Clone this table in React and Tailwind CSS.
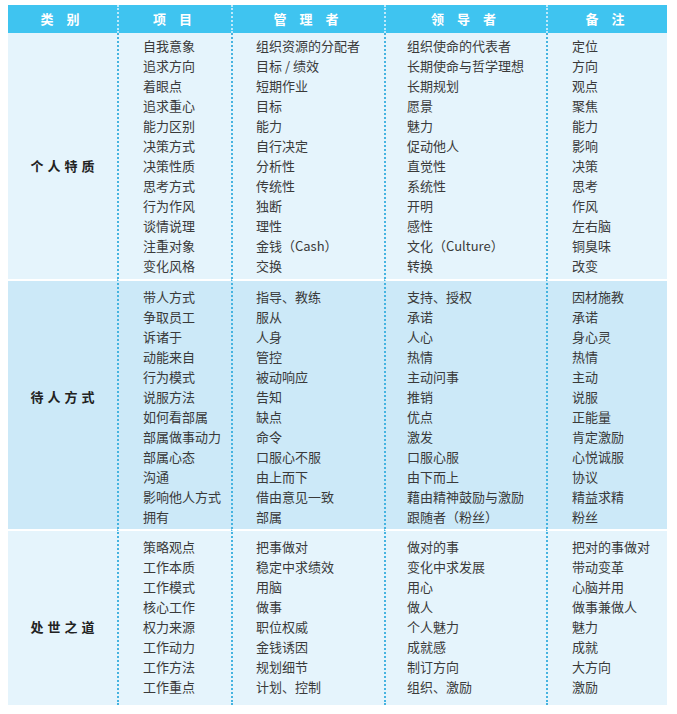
const sections = [
  {
    label: "个人特质",
    labelRow: 6,
    bg: "bg-[#e5f4fc]",
    pad: "pt-[3px] pb-[3px]",
    rows: [
      ["自我意象", "组织资源的分配者", "组织使命的代表者", "定位"],
      ["追求方向", "目标 / 绩效", "长期使命与哲学理想", "方向"],
      ["着眼点", "短期作业", "长期规划", "观点"],
      ["追求重心", "目标", "愿景", "聚焦"],
      ["能力区别", "能力", "魅力", "能力"],
      ["决策方式", "自行决定", "促动他人", "影响"],
      ["决策性质", "分析性", "直觉性", "决策"],
      ["思考方式", "传统性", "系统性", "思考"],
      ["行为作风", "独断", "开明", "作风"],
      ["谈情说理", "理性", "感性", "左右脑"],
      ["注重对象", "金钱（Cash）", "文化（Culture）", "铜臭味"],
      ["变化风格", "交换", "转换", "改变"],
    ],
  },
  {
    label: "待人方式",
    labelRow: 5,
    bg: "bg-[#cce9f8]",
    pad: "pt-[6px] pb-[2px]",
    rows: [
      ["带人方式", "指导、教练", "支持、授权", "因材施教"],
      ["争取员工", "服从", "承诺", "承诺"],
      ["诉诸于", "人身", "人心", "身心灵"],
      ["动能来自", "管控", "热情", "热情"],
      ["行为模式", "被动响应", "主动问事", "主动"],
      ["说服方法", "告知", "推销", "说服"],
      ["如何看部属", "缺点", "优点", "正能量"],
      ["部属做事动力", "命令", "激发", "肯定激励"],
      ["部属心态", "口服心不服", "口服心服", "心悦诚服"],
      ["沟通", "由上而下", "由下而上", "协议"],
      ["影响他人方式", "借由意见一致", "藉由精神鼓励与激励", "精益求精"],
      ["拥有", "部属", "跟随者（粉丝）", "粉丝"],
    ],
  },
  {
    label: "处世之道",
    labelRow: 4,
    bg: "bg-[#e5f4fc]",
    pad: "pt-[6px] pb-[8px]",
    rows: [
      ["策略观点", "把事做对", "做对的事", "把对的事做对"],
      ["工作本质", "稳定中求绩效", "变化中求发展", "带动变革"],
      ["工作模式", "用脑", "用心", "心脑并用"],
      ["核心工作", "做事", "做人", "做事兼做人"],
      ["权力来源", "职位权威", "个人魅力", "魅力"],
      ["工作动力", "金钱诱因", "成就感", "成就"],
      ["工作方法", "规划细节", "制订方向", "大方向"],
      ["工作重点", "计划、控制", "组织、激励", "激励"],
    ],
  },
];

const headers = ["类别", "项目", "管理者", "领导者", "备注"];
const padL = ["", "pl-[24px]", "pl-[23px]", "pl-[21px]", "pl-[24px]"];

export default function App() {
  return (
    <div
      className="pl-[8px] pt-[5px] bg-white w-[677px] h-[714px]"
      style={{ fontFamily: '"Noto Sans CJK SC", "Noto Sans", sans-serif' }}
    >
      <div className="grid grid-cols-[109px_114px_153px_162px_121px] w-[659px] text-[13px] text-[#3a3a3a]">
        {headers.map((h, i) => (
          <div
            key={h}
            className={`h-[28px] flex items-center justify-center bg-[#3fc4f0] text-white font-bold tracking-[5px] ${
              i > 0 ? "border-l-2 border-dotted border-[#bfe9fb]" : ""
            }`}
          >
            {h.split("").join(" ")}
          </div>
        ))}
        {sections.map((s, si) => (
          <Section key={s.label} s={s} first={si === 0} />
        ))}
      </div>
    </div>
  );
}

function Section({ s, first }) {
  const sep = first ? "" : "border-t-2 border-t-white [border-top-style:solid]";
  return (
    <>
      <div className={`${s.bg} ${s.pad} ${sep}`}>
        <div
          className="leading-[20px] text-center font-bold text-[#222] tracking-[4px] pl-[4px]"
          style={{ paddingTop: s.labelRow * 20 }}
        >
          {s.label}
        </div>
      </div>
      {[0, 1, 2, 3].map((c) => (
        <div
          key={c}
          className={`${s.bg} ${s.pad} ${padL[c + 1]} border-l-2 border-l-[#45b3e0] border-dotted ${sep}`}
        >
          {s.rows.map((r, ri) => (
            <div key={ri} className="leading-[20px] h-[20px] whitespace-nowrap">
              {r[c]}
            </div>
          ))}
        </div>
      ))}
    </>
  );
}
